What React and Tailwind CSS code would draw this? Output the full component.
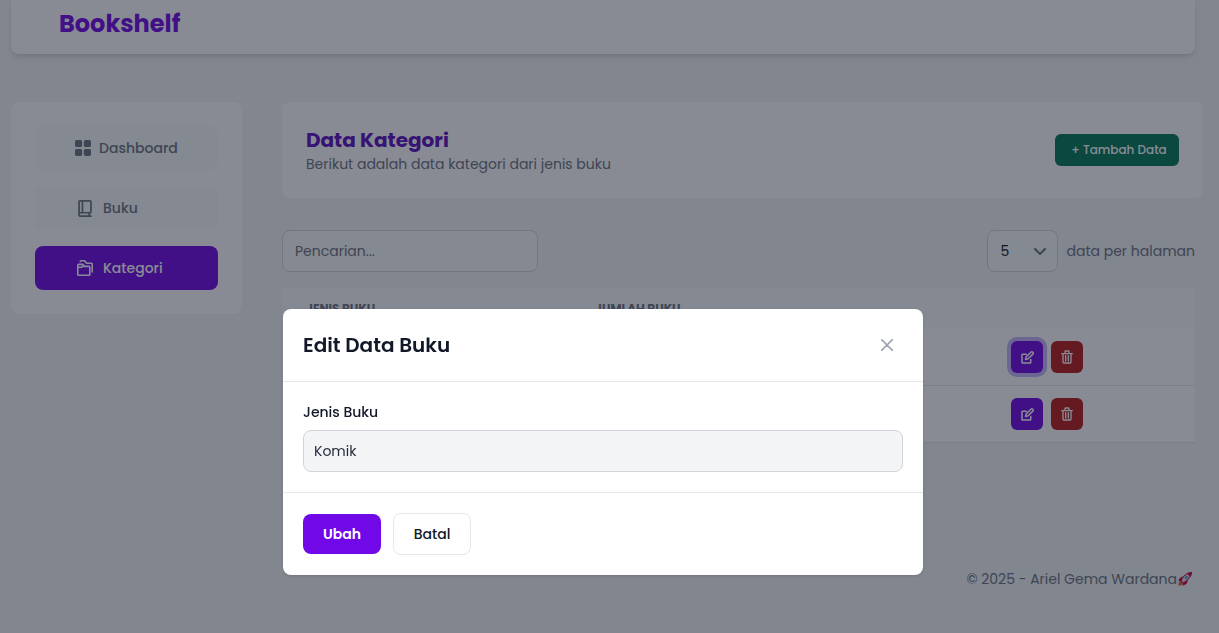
const BASE_STROKE = {
  fill: "none",
  stroke: "currentColor",
  strokeWidth: 2,
  strokeLinecap: "round",
  strokeLinejoin: "round",
  "aria-hidden": true,
};

function GridIcon() {
  return (
    <svg className="size-4" viewBox="0 0 18 18" fill="currentColor" aria-hidden="true">
      <rect x="0" y="0" width="8" height="8" rx="1.857" />
      <rect x="10" y="0" width="8" height="8" rx="1.857" />
      <rect x="0" y="10" width="8" height="8" rx="1.857" />
      <rect x="10" y="10" width="8" height="8" rx="1.857" />
    </svg>
  );
}

function BookIcon() {
  return (
    <svg className="h-[17px] w-[14px]" viewBox="0 0 16 20" {...BASE_STROKE}>
      <path d="M1 17V2a1 1 0 0 1 1-1h12a1 1 0 0 1 1 1v12a1 1 0 0 1-1 1H3a2 2 0 0 0-2 2Zm0 0a2 2 0 0 0 2 2h12M5 15V1m8 18v-4" />
    </svg>
  );
}

function FoldersIcon() {
  return (
    <svg className="size-4" viewBox="0 0 20 20" {...BASE_STROKE}>
      <path d="M1 9v9a1 1 0 0 0 1 1h13a1 1 0 0 0 1-1V9a1 1 0 0 0-1-1H9.500L7 5.500H2a1 1 0 0 0-1 1V9Zm0 0h5l2-1.500M4 2a1 1 0 0 1 1-1h4.500L12 4h6a1 1 0 0 1 1 1v10" />
    </svg>
  );
}

function EditIcon() {
  return (
    <svg className="size-[13px]" viewBox="0 0 20 20" {...BASE_STROKE} strokeWidth={2.3}>
      <path d="M8 5H2.500a1 1 0 0 0-1 1v11.500a1 1 0 0 0 1 1H14a1 1 0 0 0 1-1V13" />
      <path d="m7 13 1-4 7.200-7.200a2 2 0 0 1 3 3L11 12l-4 1Z" />
    </svg>
  );
}

function TrashIcon() {
  return (
    <svg className="h-[14px] w-3" viewBox="0 0 18 20" {...BASE_STROKE}>
      <path d="M1 5h16M7 8v8m4-8v8M7 1h4a1 1 0 0 1 1 1v3H6V2a1 1 0 0 1 1-1ZM3 5h12v13a1 1 0 0 1-1 1H4a1 1 0 0 1-1-1V5Z" />
    </svg>
  );
}

function RocketIcon() {
  return (
    <svg className="size-4" viewBox="0 0 32 32" role="img" aria-label="Roket">
      <path d="M3 29c-1-4 1-8 5-9l4 4c-1 4-5 6-9 5Z" fill="#e0603a" />
      <path d="M3 20c1-6 5-9 11-9l-5 10-6-1Zm8 9 1-6 9-5c1 6-3 10-10 11Z" fill="#c8003c" />
      <path d="M8 20c2-8 9-16 19-17 1 9-7 17-15 21l-4-4Z" fill="#d9d3dc" />
      <path d="M20 5c3-2 6-3 10-3 0 4-1 7-3 10l-7-7Z" fill="#c8003c" />
      <path d="M8 20C10 13 16 6 24 4M12 24c8-4 13-9 15-15M8 20l4 4" fill="none" stroke="#c8003c" strokeWidth="2" />
      <circle cx="19" cy="13" r="3" fill="#4b9bd0" />
    </svg>
  );
}

const MENU = [
  { label: "Dashboard", Icon: GridIcon, box: "w-4" },
  { label: "Buku", Icon: BookIcon, box: "w-5" },
  { label: "Kategori", Icon: FoldersIcon, box: "w-5", active: true },
];

function Sidebar() {
  return (
    <aside className="w-[231px] shrink-0 rounded-lg bg-white p-6">
      <nav className="flex flex-col gap-4">
        {MENU.map(({ label, Icon, box, active }) => (
          <a
            key={label}
            href="#"
            className={`flex h-11 items-center gap-2 rounded-lg pl-10 text-sm font-medium ${
              active ? "bg-violet-700 text-white" : "bg-[#f9fafb] text-[#6b7280]"
            }`}
          >
            <span className={`flex shrink-0 justify-center ${box}`}>
              <Icon />
            </span>
            {label}
          </a>
        ))}
      </nav>
    </aside>
  );
}

function CategoryRow({ selected }) {
  return (
    <tr className="border-b border-[#e5e7eb] bg-white">
      <td className="px-6 py-3" />
      <td className="px-6 py-3" />
      <td className="px-6 py-3">
        <div className="flex gap-2">
          <button
            type="button"
            aria-label="Ubah"
            className={`flex size-8 items-center justify-center rounded-md bg-violet-700 text-white ${
              selected ? "ring-4 ring-violet-300" : ""
            }`}
          >
            <EditIcon />
          </button>
          <button
            type="button"
            aria-label="Hapus"
            className="flex size-8 items-center justify-center rounded-md bg-[#b91c1c] text-white"
          >
            <TrashIcon />
          </button>
        </div>
      </td>
    </tr>
  );
}

function EditModal() {
  return (
    <div className="fixed inset-0 flex items-start justify-center bg-[#111827]/50 px-4 pt-[309px]">
      <div
        role="dialog"
        aria-modal="true"
        aria-labelledby="modal-title"
        className="mr-[13px] w-full max-w-[640px] rounded-lg bg-white shadow-sm"
      >
        <div className="flex items-center justify-between border-b border-[#e5e7eb] p-5">
          <h3 id="modal-title" className="text-xl leading-8 font-semibold text-[#111827]">
            Edit Data Buku
          </h3>
          <button
            type="button"
            aria-label="Tutup"
            className="flex size-8 items-center justify-center text-[#9ca3af]"
          >
            <svg className="size-3" viewBox="0 0 14 14" {...BASE_STROKE}>
              <path d="m1 1 6 6m0 0 6 6M7 7l6-6M7 7l-6 6" />
            </svg>
          </button>
        </div>
        <form>
          <div className="p-5">
            <label
              htmlFor="jenis"
              className="mb-2 block text-sm leading-5 font-medium text-[#111827]"
            >
              Jenis Buku
            </label>
            <input
              id="jenis"
              type="text"
              defaultValue="Komik"
              className="block h-[42px] w-full rounded-lg border border-[#d1d5db] bg-[#f3f4f6] px-[10px] text-sm text-[#1f2937]"
            />
          </div>
          <div className="flex items-center gap-3 border-t border-[#e5e7eb] px-5 py-5">
            <button
              type="submit"
              className="h-10 w-[78px] rounded-lg bg-violet-700 text-sm font-semibold text-white"
            >
              Ubah
            </button>
            <button
              type="button"
              className="h-[42px] w-[78px] rounded-lg border border-[#e5e7eb] bg-white text-sm font-medium text-[#111827]"
            >
              Batal
            </button>
          </div>
        </form>
      </div>
    </div>
  );
}

export default function App() {
  return (
    <div className="min-h-screen bg-[#f3f4f6] pr-4 pl-[11px] font-['Poppins','Inter',sans-serif] text-[#6b7280]">
      <header className="mr-2 rounded-b-lg bg-white px-12 pt-2 pb-[14px] shadow-md">
        <a href="#" className="text-2xl leading-8 font-bold text-violet-700">
          Bookshelf
        </a>
      </header>

      <div className="mt-12 flex items-start gap-10">
        <Sidebar />
        <main className="min-w-0 flex-1">
          <section className="flex items-center justify-between rounded-lg bg-white px-6 py-6">
            <div>
              <h1 className="text-xl leading-7 font-bold text-violet-800">Data Kategori</h1>
              <p className="text-sm leading-5">Berikut adalah data kategori dari jenis buku</p>
            </div>
            <button
              type="button"
              className="h-8 w-[124px] rounded-md bg-[#047857] pl-1 text-xs font-medium text-white"
            >
              + Tambah Data
            </button>
          </section>

          <div className="mt-8 mr-2 flex items-center justify-between">
            <input
              type="search"
              aria-label="Pencarian"
              placeholder="Pencarian..."
              className="h-[42px] w-64 rounded-lg border border-[#d1d5db] bg-[#f9fafb] px-3 text-sm placeholder:text-[#6b7280]"
            />
            <div className="flex items-center gap-2">
              <div className="grid items-center">
                <select
                  id="per-page"
                  defaultValue="5"
                  className="col-start-1 row-start-1 h-[42px] w-[71px] appearance-none rounded-lg border border-[#d1d5db] bg-[#f9fafb] px-3 text-sm text-[#111827]"
                >
                  <option>5</option>
                  <option>10</option>
                </select>
                <svg
                  className="pointer-events-none col-start-1 row-start-1 mr-3 h-[7px] w-3 justify-self-end text-[#6b7280]"
                  viewBox="0 0 12 7"
                  {...BASE_STROKE}
                >
                  <path d="m1 1 5 5 5-5" />
                </svg>
              </div>
              <label htmlFor="per-page" className="text-sm">
                data per halaman
              </label>
            </div>
          </div>

          <div className="mt-4 mr-2">
            <table className="w-full table-fixed text-left">
              <thead className="bg-[#f9fafb] text-xs uppercase">
                <tr className="h-[41px]">
                  <th className="w-[289px] px-6 font-bold">Jenis Buku</th>
                  <th className="w-[416px] px-6 font-bold">Jumlah Buku</th>
                  <th className="px-6" aria-label="Aksi" />
                </tr>
              </thead>
              <tbody>
                <CategoryRow selected />
                <CategoryRow />
              </tbody>
            </table>
          </div>

          <footer className="mt-[126px] mr-2 flex items-center justify-end pr-[2px] text-sm leading-5">
            <span>© 2025 - Ariel Gema Wardana</span>
            <RocketIcon />
          </footer>
        </main>
      </div>

      <EditModal />
    </div>
  );
}
